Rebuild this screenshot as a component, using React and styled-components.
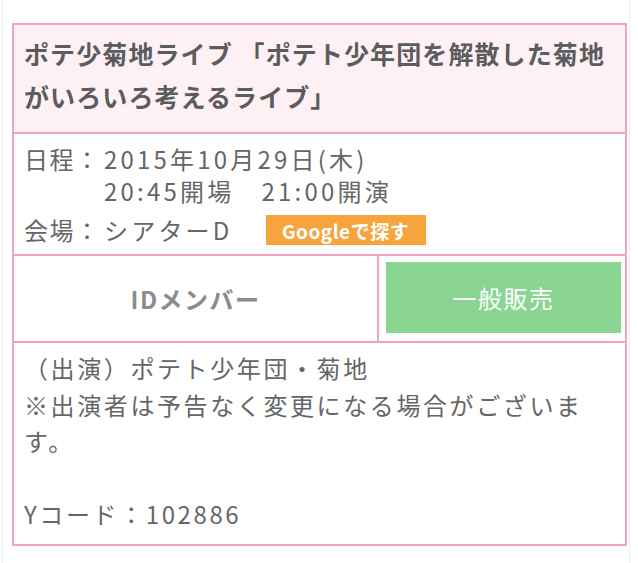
import React from "react";
import styled, { createGlobalStyle } from "styled-components";

const Global = createGlobalStyle`
  html, body { margin: 0; padding: 0; background: #fff; }
  body { font-family: "Noto Sans CJK JP", "Noto Sans", sans-serif; }
`;

const PINK = "#f2a0c6";

const Frame = styled.div`
  margin-left: 2px;
  width: 628px;
  min-height: 563px;
  box-sizing: border-box;
  border-left: 1px solid #eef0f0;
  border-right: 1px solid #eef0f0;
  padding: 23px 0 0 9px;
`;

const Card = styled.div`
  width: 615px;
  box-sizing: border-box;
  border: 2px solid ${PINK};
  color: #666;
`;

const Header = styled.div`
  background: #fdf1f6;
  padding: 7px 10px 14px 10px;
  border-bottom: 2px solid ${PINK};
`;

const Title = styled.h1`
  margin: 0;
  font-size: 25px;
  line-height: 43px;
  font-weight: 700;
  color: #5c5c5c;
  letter-spacing: 1.1px;
`;

const Info = styled.div`
  padding: 9px 10px 1px 10px;
  border-bottom: 2px solid ${PINK};
  display: grid;
  grid-template-columns: 80px 1fr;
  font-size: 24px;
  letter-spacing: 3.2px;
  line-height: 32px;
  color: #666;
`;

const Label = styled.div`
  grid-column: 1;
  align-self: center;
  white-space: nowrap;
  letter-spacing: 1.5px;
`;

const Value = styled.div`
  grid-column: 2;
  display: flex;
  align-items: center;
  white-space: nowrap;
  min-height: ${(p) => (p.$tall ? "46px" : "32px")};
`;

const SearchButton = styled.span`
  display: inline-flex;
  align-items: center;
  justify-content: center;
  margin-left: 33px;
  width: 160px;
  height: 30px;
  background: #f8a43c;
  color: #fff;
  font-size: 19px;
  font-weight: 700;
  letter-spacing: 0.5px;
  line-height: 1;
`;

const Buttons = styled.div`
  display: grid;
  grid-template-columns: 363px 1fr;
  height: 85px;
  border-bottom: 2px solid ${PINK};
`;

const Cell = styled.div`
  display: flex;
  align-items: stretch;
  justify-content: stretch;
  border-left: ${(p) => (p.$divider ? `2px solid ${PINK}` : "none")};
  padding: ${(p) => (p.$divider ? "6px 4px 8px 7px" : "0")};
`;

const SaleButton = styled.div`
  flex: 1;
  display: flex;
  align-items: center;
  justify-content: center;
  font-size: 24px;
  letter-spacing: 1.5px;
  background: ${(p) => (p.$active ? "#8ad592" : "transparent")};
  color: ${(p) => (p.$active ? "#fff" : "#8c8c8c")};
  font-weight: ${(p) => (p.$active ? 400 : 700)};
`;

const Notes = styled.div`
  padding: 7px 10px 11px 10px;
  font-size: 24px;
  letter-spacing: 2.6px;
  line-height: 36.5px;
  color: #666;
`;

const Line = styled.div`
  min-height: 36.5px;
`;

export default function App() {
  return (
    <>
      <Global />
      <Frame>
        <Card>
          <Header>
            <Title>
              ポテ少菊地ライブ 「ポテト少年団を解散した菊地
              <br />
              がいろいろ考えるライブ」
            </Title>
          </Header>
          <Info>
            <Label>日程：</Label>
            <Value>2015年10月29日(木)</Value>
            <Value>20:45開場　21:00開演</Value>
            <Label>会場：</Label>
            <Value $tall>
              シアターD
              <SearchButton>Googleで探す</SearchButton>
            </Value>
          </Info>
          <Buttons>
            <Cell>
              <SaleButton>IDメンバー</SaleButton>
            </Cell>
            <Cell $divider>
              <SaleButton $active>一般販売</SaleButton>
            </Cell>
          </Buttons>
          <Notes>
            <Line>（出演）ポテト少年団・菊地</Line>
            <Line>※出演者は予告なく変更になる場合がございま</Line>
            <Line>す。</Line>
            <Line />
            <Line>Yコード：102886</Line>
          </Notes>
        </Card>
      </Frame>
    </>
  );
}
